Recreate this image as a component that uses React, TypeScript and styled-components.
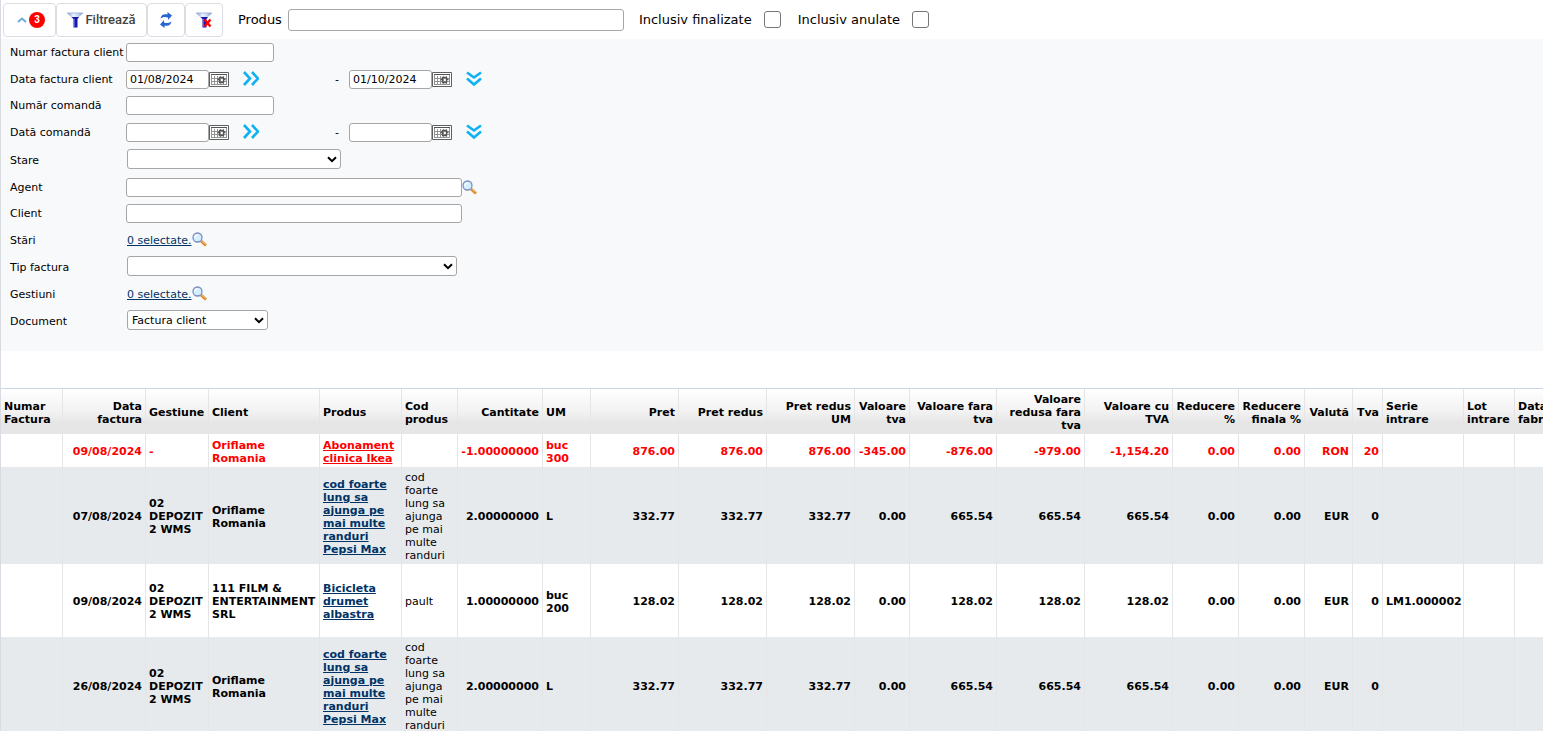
import React from "react";
import styled, { createGlobalStyle, css } from "styled-components";

const GlobalStyle = createGlobalStyle`
  * { box-sizing: border-box; }
  html { overflow: hidden; }
  body {
    margin: 0;
    background: #fff;
    color: #000;
    font: 11px/13px Verdana, "DejaVu Sans", sans-serif;
  }
`;

const Page = styled.main`
  min-height: 100vh;
  border-left: 1px solid #d9dbe2;
`;

const Toolbar = styled.header`
  display: flex;
  align-items: center;
  height: 39px;
  padding: 0 2px;
  font-size: 13px;
  line-height: 16px;
`;

const ToolButton = styled.button<{ $width: number }>`
  display: flex;
  align-items: center;
  justify-content: center;
  gap: 2px;
  width: ${(p) => p.$width}px;
  height: 34px;
  padding: 0;
  border: 1px solid #dcdde3;
  border-radius: 4px;
  background: #fff;
  color: #444;
  font: 500 13px/16px Roboto, sans-serif;
  cursor: pointer;
`;

const CollapseButton = styled(ToolButton)`
  padding-left: 3px;
`;

const Badge = styled.span`
  width: 16px;
  height: 16px;
  border-radius: 50%;
  background: #f00;
  color: #fff;
  font: bold 10px/16px "Liberation Sans", sans-serif;
  text-align: center;
`;

const ToolField = styled.label`
  display: flex;
  align-items: center;
  gap: 6px;
  margin-left: 15px;
`;

const CheckField = styled(ToolField)`
  gap: 12px;
  & + & { margin-left: 17px; }
`;

const TickBox = styled.input`
  appearance: none;
  width: 17px;
  height: 17px;
  margin: 0;
  border: 1px solid #767676;
  border-radius: 3px;
  background: #fff;
  &:checked { background: #0075ff; }
`;

const TextInput = styled.input<{ $width: number; $tall?: boolean }>`
  width: ${(p) => p.$width}px;
  height: ${(p) => (p.$tall ? 22 : 19)}px;
  padding: 0 3px;
  border: 1px solid #a6a6a6;
  border-radius: 3px;
  background: #fff;
  color: #000;
  font: inherit;
`;

const Filters = styled.form`
  padding: 1px 9px 16px;
  background: #f8f9fb;
`;

const rowStyles = {
  text: css`height: 26px; padding-bottom: 1px;`,
  wide: css`height: 27px;`,
  select: css`height: 28px;`,
  pick: css`height: 26px;`,
};

const FilterRow = styled.div<{ $kind: keyof typeof rowStyles }>`
  display: flex;
  align-items: center;
  ${(p) => rowStyles[p.$kind]}
`;

const FilterLabel = styled.label`
  width: 116px;
  white-space: nowrap;
`;

const SelectWrap = styled.span<{ $width: number }>`
  display: grid;
  align-items: center;
  width: ${(p) => p.$width}px;
  margin: 0 0 2px 1px;
  & > * { grid-area: 1 / 1; }
  & > svg { justify-self: end; margin-right: 4px; pointer-events: none; }
`;

const Select = styled.select`
  appearance: none;
  width: 100%;
  height: 20px;
  padding: 0 4px;
  border: 1px solid #a6a6a6;
  border-radius: 3px;
  background: #fff;
  color: #000;
  font: inherit;
`;

const IconButton = styled.button<{ $gap?: number }>`
  display: flex;
  margin-left: ${(p) => p.$gap ?? 0}px;
  padding: 0;
  border: 0;
  background: none;
  cursor: pointer;
`;

const Dash = styled.span`
  width: 90px;
  padding-right: 10px;
  text-align: right;
`;

const PickLink = styled.a`
  margin-left: 1px;
  color: #003366;
`;

const TableArea = styled.section`
  margin-top: 37px;
  overflow: hidden;
`;

const Table = styled.table`
  width: 1594px;
  table-layout: fixed;
  border-collapse: separate;
  border-spacing: 0;
  border-top: 1px solid #c8d7e6;
`;

const HeadRow = styled.tr`
  height: 45px;
  background: linear-gradient(#fff 0%, #f2f2f2 50%, #e6e6e6 75%, #e6e6e6 100%);
`;

const cell = css<{ $right?: boolean }>`
  padding: 4px 3px 2px;
  border-right: 1px solid #e5e5e5;
  text-align: ${(p) => (p.$right ? "right" : "left")};
  vertical-align: middle;
`;

const HeadCell = styled.th<{ $right?: boolean }>`
  ${cell}
`;

const Cell = styled.td<{ $right?: boolean; $plain?: boolean }>`
  ${cell}
  font-weight: ${(p) => (p.$plain ? "normal" : "bold")};
`;

const BodyRow = styled.tr<{ $storno?: boolean; $height: number }>`
  height: ${(p) => p.$height}px;
  color: ${(p) => (p.$storno ? "#f00" : "#000")};
  &:nth-child(even) { background: #e7eaed; }
  a { color: ${(p) => (p.$storno ? "#f00" : "#003366")}; }
`;

const Funnel = ({ clear }: { clear?: boolean }) => (
  <svg width="16" height="16" viewBox="0 0 16 16" aria-hidden="true">
    <defs>
      <linearGradient id="cone" x1="0" x2="1">
        <stop offset="0" stopColor="#6f8fd0" />
        <stop offset="0.4" stopColor="#eef5ff" />
        <stop offset="0.7" stopColor="#c3d6f2" />
        <stop offset="1" stopColor="#5d7fc4" />
      </linearGradient>
    </defs>
    <path d="M0 1h16L10.500 6.500h-5z" fill="url(#cone)" />
    <path d="M0 1h16" stroke="#a9b6d4" />
    <path d="M4.500 5h7.500L10.500 7v8.500H6.500V7z" fill="#1616a8" />
    <path d="M7.500 7v8" stroke="#4c5fe0" />
    {clear && <path d="M8.500 7.500l6 7M14.500 7.500l-6 7" stroke="#f00" strokeWidth="2.400" />}
  </svg>
);

const Refresh = () => (
  <svg width="14" height="16" viewBox="0 0 14 16" aria-hidden="true" fill="#2765d2">
    <path d="M1.500 6.500C2 3 5 1.500 8.500 2.500V0L13 3.500 9 8V5.500C6 4.500 3.500 5 1.500 6.500z" />
    <path d="M12.500 9.500c-.5 3.500-3.500 5-7 4V16L1 12.500 5 8v2.500C8 11.500 10.500 11 12.500 9.500z" />
  </svg>
);

const Collapse = () => (
  <svg width="10" height="6" viewBox="0 0 10 6" aria-hidden="true">
    <path d="M1 5l4-3.500L9 5" fill="none" stroke="#69afd6" strokeWidth="2" />
  </svg>
);

const Calendar = () => (
  <svg width="20" height="15" viewBox="0 0 20 15" aria-hidden="true">
    <path d="M.5.5h19v14H.5z" fill="#fff" stroke="#5f5f5f" />
    <path d="M2 2.500h16" stroke="#555" />
    <path d="M2.500 3v10M5.500 4v9M8.500 4v9M11.500 4v9M14.500 4v9M17.500 3v10M3 6.500h15M3 9.500h15M3 12.500h15" stroke="#929292" />
    <path d="M10.500 5.500h4v5h-4zM8.500 7.500h2M14.500 7.500h2" fill="none" stroke="#555" strokeWidth="1.300" />
  </svg>
);

const Chevrons = ({ down }: { down?: boolean }) => (
  <svg width="16" height="17" viewBox="0 0 16 17" aria-hidden="true">
    <path
      d={down ? "M1 1.500l7 5 7-5M1 7.500l7 6 7-6" : "M1 1l6 6.500L1 14M9 1l6 6.500L9 14"}
      fill="none"
      stroke="#0eb1f2"
      strokeWidth="2.600"
    />
  </svg>
);

const Magnifier = () => (
  <svg width="16" height="16" viewBox="0 0 16 16" aria-hidden="true">
    <path d="M9 9l5 4.500" stroke="#d98a2e" strokeWidth="3" />
    <path d="M9.500 9l5 4" stroke="#f5bd72" />
    <circle cx="5.500" cy="5.500" r="4.500" fill="#d3efff" stroke="#7b8cc0" strokeWidth="1.300" />
    <path d="M3 5.500A2.500 2.500 0 0 1 5.500 3" fill="none" stroke="#fff" strokeWidth="1.500" />
  </svg>
);

const Caret = () => (
  <svg width="10" height="7" viewBox="0 0 10 7" aria-hidden="true">
    <path d="M1 1.200l4 4 4-4" fill="none" stroke="#000" strokeWidth="2" />
  </svg>
);

const TextFilter = ({ id, label, width, lookup }: { id: string; label: string; width: number; lookup?: boolean }) => (
  <FilterRow $kind={lookup ? "wide" : "text"}>
    <FilterLabel htmlFor={id}>{label}</FilterLabel>
    <TextInput id={id} $width={width} />
    {lookup && (
      <IconButton type="button" aria-label={`Caută ${label}`}>
        <Magnifier />
      </IconButton>
    )}
  </FilterRow>
);

const DateFilter = ({ id, label, from, to }: { id: string; label: string; from?: string; to?: string }) => (
  <FilterRow $kind="wide">
    <FilterLabel htmlFor={id}>{label}</FilterLabel>
    <TextInput id={id} $width={83} defaultValue={from} />
    <IconButton type="button" aria-label="Calendar"><Calendar /></IconButton>
    <IconButton type="button" $gap={14} aria-label="Copiază data"><Chevrons /></IconButton>
    <Dash>-</Dash>
    <TextInput $width={83} defaultValue={to} aria-label={`${label} până la`} />
    <IconButton type="button" aria-label="Calendar"><Calendar /></IconButton>
    <IconButton type="button" $gap={14} aria-label="Perioade"><Chevrons down /></IconButton>
  </FilterRow>
);

const SelectFilter = ({ id, label, width, option = "" }: { id: string; label: string; width: number; option?: string }) => (
  <FilterRow $kind="select">
    <FilterLabel htmlFor={id}>{label}</FilterLabel>
    <SelectWrap $width={width}>
      <Select id={id}><option>{option}</option></Select>
      <Caret />
    </SelectWrap>
  </FilterRow>
);

const PickFilter = ({ id, label }: { id: string; label: string }) => (
  <FilterRow $kind="pick">
    <FilterLabel as="span" id={id}>{label}</FilterLabel>
    <PickLink href="#" aria-describedby={id}>0 selectate.</PickLink>
    <IconButton type="button" aria-label={`Alege ${label}`}><Magnifier /></IconButton>
  </FilterRow>
);

const columns: { title: string; width: number; right?: boolean }[] = [
  { title: "Numar Factura", width: 62 },
  { title: "Data factura", width: 83, right: true },
  { title: "Gestiune", width: 63 },
  { title: "Client", width: 111 },
  { title: "Produs", width: 82 },
  { title: "Cod produs", width: 56 },
  { title: "Cantitate", width: 85, right: true },
  { title: "UM", width: 48 },
  { title: "Pret", width: 88, right: true },
  { title: "Pret redus", width: 88, right: true },
  { title: "Pret redus UM", width: 88, right: true },
  { title: "Valoare tva", width: 55, right: true },
  { title: "Valoare fara tva", width: 87, right: true },
  { title: "Valoare redusa fara tva", width: 88, right: true },
  { title: "Valoare cu TVA", width: 88, right: true },
  { title: "Reducere %", width: 66, right: true },
  { title: "Reducere finala %", width: 66, right: true },
  { title: "Valută", width: 48, right: true },
  { title: "Tva", width: 30, right: true },
  { title: "Serie intrare", width: 81 },
  { title: "Lot intrare", width: 51 },
  { title: "Data fabricatie", width: 80 },
];

const PRODUCT = 4;
const CODE = 5;

const rows: { height: number; storno?: boolean; values: string[] }[] = [
  {
    height: 33,
    storno: true,
    values: ["", "09/08/2024", "-", "Oriflame Romania", "Abonament clinica Ikea", "", "-1.00000000", "buc 300", "876.00", "876.00", "876.00", "-345.00", "-876.00", "-979.00", "-1,154.20", "0.00", "0.00", "RON", "20", "", "", ""],
  },
  {
    height: 97,
    values: ["", "07/08/2024", "02 DEPOZIT 2 WMS", "Oriflame Romania", "cod foarte lung sa ajunga pe mai multe randuri Pepsi Max", "cod foarte lung sa ajunga pe mai multe randuri", "2.00000000", "L", "332.77", "332.77", "332.77", "0.00", "665.54", "665.54", "665.54", "0.00", "0.00", "EUR", "0", "", "", ""],
  },
  {
    height: 73,
    values: ["", "09/08/2024", "02 DEPOZIT 2 WMS", "111 FILM & ENTERTAINMENT SRL", "Bicicleta drumet albastra", "pault", "1.00000000", "buc 200", "128.02", "128.02", "128.02", "0.00", "128.02", "128.02", "128.02", "0.00", "0.00", "EUR", "0", "LM1.000002", "", ""],
  },
  {
    height: 97,
    values: ["", "26/08/2024", "02 DEPOZIT 2 WMS", "Oriflame Romania", "cod foarte lung sa ajunga pe mai multe randuri Pepsi Max", "cod foarte lung sa ajunga pe mai multe randuri", "2.00000000", "L", "332.77", "332.77", "332.77", "0.00", "665.54", "665.54", "665.54", "0.00", "0.00", "EUR", "0", "", "", ""],
  },
];

export default function App() {
  return (
    <Page>
      <GlobalStyle />
      <Toolbar>
        <CollapseButton type="button" $width={53} aria-label="Filtre active: 3">
          <Collapse />
          <Badge>3</Badge>
        </CollapseButton>
        <ToolButton type="button" $width={91}><Funnel />Filtrează</ToolButton>
        <ToolButton type="button" $width={38} aria-label="Reîncarcă"><Refresh /></ToolButton>
        <ToolButton type="button" $width={38} aria-label="Șterge filtrele"><Funnel clear /></ToolButton>
        <ToolField>Produs<TextInput $width={336} $tall /></ToolField>
        <CheckField>Inclusiv finalizate<TickBox type="checkbox" /></CheckField>
        <CheckField>Inclusiv anulate<TickBox type="checkbox" /></CheckField>
      </Toolbar>
      <Filters>
        <TextFilter id="numar-factura" label="Numar factura client" width={148} />
        <DateFilter id="data-factura" label="Data factura client" from="01/08/2024" to="01/10/2024" />
        <TextFilter id="numar-comanda" label="Număr comandă" width={148} />
        <DateFilter id="data-comanda" label="Dată comandă" />
        <SelectFilter id="stare" label="Stare" width={214} />
        <TextFilter id="agent" label="Agent" width={336} lookup />
        <TextFilter id="client" label="Client" width={336} />
        <PickFilter id="stari" label="Stări" />
        <SelectFilter id="tip-factura" label="Tip factura" width={330} />
        <PickFilter id="gestiuni" label="Gestiuni" />
        <SelectFilter id="document" label="Document" width={141} option="Factura client" />
      </Filters>
      <TableArea>
        <Table>
          <colgroup>
            {columns.map((c) => <col key={c.title} style={{ width: c.width }} />)}
          </colgroup>
          <thead>
            <HeadRow>
              {columns.map((c) => <HeadCell key={c.title} scope="col" $right={c.right}>{c.title}</HeadCell>)}
            </HeadRow>
          </thead>
          <tbody>
            {rows.map((row, r) => (
              <BodyRow key={r} $storno={row.storno} $height={row.height}>
                {row.values.map((value, i) => (
                  <Cell key={i} $right={columns[i].right} $plain={i === CODE}>
                    {i === PRODUCT ? <a href="#">{value}</a> : value}
                  </Cell>
                ))}
              </BodyRow>
            ))}
          </tbody>
        </Table>
      </TableArea>
    </Page>
  );
}
